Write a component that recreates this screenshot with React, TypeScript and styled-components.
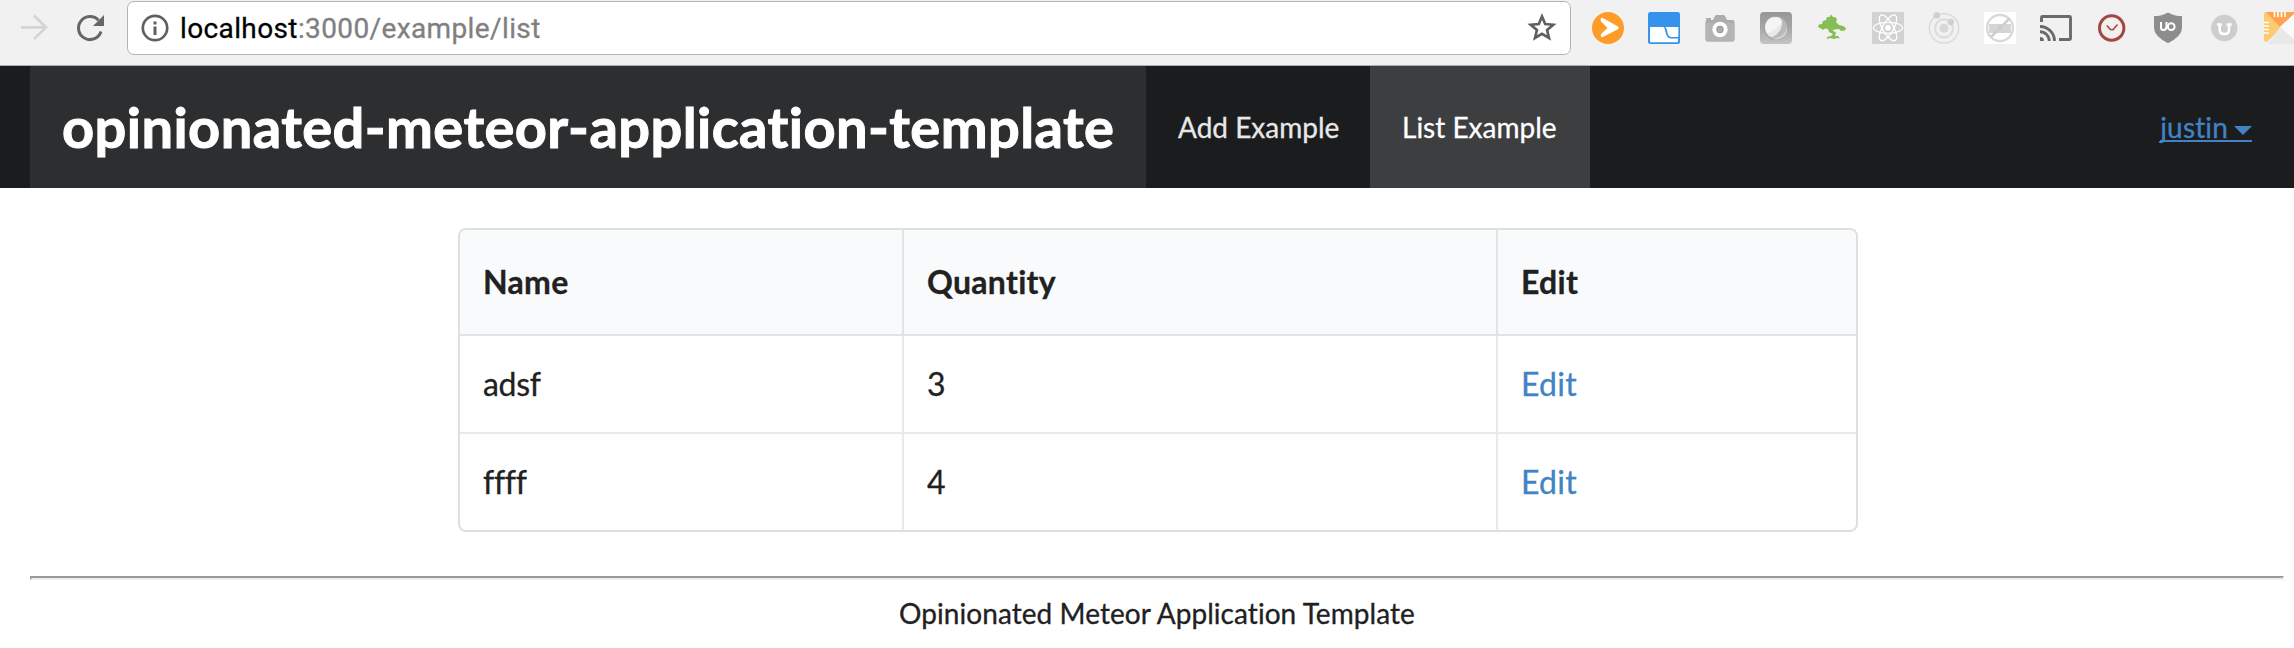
import React from "react";
import styled, { createGlobalStyle } from "styled-components";

const GlobalStyle = createGlobalStyle`
  * { box-sizing: border-box; }
  body {
    margin: 0;
    background: #fff;
    color: #212121;
    font-family: Lato, "Liberation Sans", sans-serif;
    font-size: 28px;
    font-variant-ligatures: none;
    -webkit-text-stroke: 0.3px currentColor;
    overflow: hidden;
  }
`;

const Toolbar = styled.div`
  display: flex;
  height: 66px;
  background: #f1f1f1;
  border-bottom: 1px solid #a9adab;
  overflow: hidden;
`;

const NavIcons = styled.div`
  display: flex;
  flex: none;
  width: 127px;
  height: 55px;
  padding: 14px 0 0 20px;
  gap: 24px;
`;

const AddressBar = styled.div`
  display: flex;
  align-items: center;
  flex: none;
  width: 1444px;
  height: 54px;
  margin-top: 1px;
  padding: 0 13px 0 12px;
  background: #fff;
  border: 1px solid #b4b4b4;
  border-radius: 7px;
`;

const Url = styled.div`
  flex: 1;
  padding: 2px 0 0 10px;
  font-family: Roboto, sans-serif;
  font-size: 28px;
  line-height: 40px;
  letter-spacing: 0.38px;
  color: #808080;
  white-space: nowrap;
`;

const Host = styled.span`
  color: #000;
`;

const Extensions = styled.div`
  display: flex;
  flex: none;
  gap: 24px;
  padding: 12px 0 0 21px;
`;

const Icon = styled.svg<{ $size?: number }>`
  display: block;
  flex: none;
  width: ${(p) => p.$size ?? 32}px;
  height: ${(p) => p.$size ?? 32}px;
`;

const Menu = styled.nav`
  display: flex;
  height: 122px;
  padding: 0 42px 0 30px;
  background: #1b1c1d;
`;

const MenuItem = styled.a<{ $width: number; $active?: boolean }>`
  display: flex;
  align-items: center;
  width: ${(p) => p.$width}px;
  padding: 0 0 0 32px;
  background: ${(p) => (p.$active ? "#3d3e3f" : "transparent")};
  color: ${(p) => (p.$active ? "#fff" : "#e8e8e8")};
  white-space: nowrap;
`;

const Brand = styled.h1`
  display: flex;
  align-items: center;
  width: 1116px;
  margin: 0;
  padding: 0 0 1px 32px;
  background: #2d2e30;
  color: #fff;
  font-size: 56px;
  font-weight: 700;
  letter-spacing: 0.42px;
  -webkit-text-stroke: 1px currentColor;
  white-space: nowrap;
`;

const UserLink = styled.a`
  display: flex;
  align-items: flex-start;
  align-self: flex-start;
  height: 34px;
  margin: 42px 0 0 auto;
  border-bottom: 2px solid #4183c4;
  color: #4183c4;
  letter-spacing: 0.15px;
  line-height: 39px;
`;

const Caret = styled.span`
  width: 0;
  height: 0;
  margin: 18px 0 0 6px;
  border: 9px solid transparent;
  border-top-color: #4183c4;
  border-bottom: 0;
`;

const Table = styled.table`
  width: 1400px;
  height: 304px;
  margin: 40px 0 0 458px;
  table-layout: fixed;
  border: 2px solid #dedfdf;
  border-radius: 8px;
  border-spacing: 0;
  font-size: 32px;
  letter-spacing: 0.3px;
  overflow: hidden;
`;

const Row = styled.tr`
  height: 98px;
  &:not(:last-child) > td { border-bottom: 2px solid #e8e9e9; }
  &:last-child { height: 96px; }
`;

const HeadRow = styled.tr`
  height: 106px;
`;

const HeadCell = styled.th`
  padding: 0 0 1px 23px;
  background: #f9fafb;
  border-bottom: 2px solid #e2e3e4;
  text-align: left;
  & + & { border-left: 2px solid #e2e3e4; }
`;

const Cell = styled.td`
  padding: 0 0 2px 23px;
  &:first-child { letter-spacing: -0.3px; }
  & + & { border-left: 2px solid #e8e9e9; }
`;

const EditLink = styled.a`
  color: #4183c4;
`;

const Rule = styled.hr`
  height: 4px;
  margin: 44px 10px 0 30px;
  border: 2px solid;
  border-color: #9a9a9a #eee #eee #9a9a9a;
`;

const Footer = styled.footer`
  padding: 13px 0 0 20px;
  line-height: 40px;
  letter-spacing: 0.06px;
  text-align: center;
`;

const ForwardIcon = () => (
  <Icon viewBox="0 0 32 32" fill="none" stroke="#d5d5d5" strokeWidth="2.7">
    <path d="M1 13.3H26M14 1.5L26 13.3L14 25" />
  </Icon>
);

const ReloadIcon = () => (
  <Icon viewBox="0 0 32 32" fill="none" stroke="#666" strokeWidth="3">
    <path d="M25 17.5A11.5 11.5 0 1 1 22.5 6.3" />
    <path d="M28 1V12H17Z" fill="#666" stroke="none" />
  </Icon>
);

const InfoIcon = () => (
  <Icon $size={30} viewBox="0 0 30 30" fill="none">
    <circle cx="15" cy="15" r="12.2" stroke="#5f6063" strokeWidth="2.7" />
    <path d="M13.5 8.5h3v3h-3zM13.5 13.5h3v8.5h-3z" fill="#5f6063" />
  </Icon>
);

const StarIcon = () => (
  <Icon $size={30} viewBox="0 0 30 30" fill="none">
    <path d="M15 3.5L18.2 11L26.3 11.7L20.1 17L22 25L15 20.8L8 25L9.9 17L3.7 11.7L11.8 11Z" stroke="#5f6063" strokeWidth="2.7" />
  </Icon>
);

const PlayIcon = () => (
  <Icon viewBox="0 0 32 32">
    <circle cx="16" cy="16" r="16" fill="#ff9c28" />
    <path d="M8.6 7.4Q8.8 5.3 10.8 6L26 14.5Q27.4 16 26 17.3L10.8 25Q8.5 25.6 8.8 23.3Q9 22 10 21L15.5 16L9.7 10Q8.5 9 8.6 7.4Z" fill="#fff" />
  </Icon>
);

const WindowIcon = () => (
  <Icon viewBox="0 0 32 32">
    <rect width="32" height="32" rx="2.5" fill="#3692ea" />
    <path d="M2 15H14.8C17 15 17 18.5 17.8 21Q19 26 22.5 26.6H30V29.5Q30 30.3 29 30.3H3Q2 30.3 2 29.3Z" fill="#fff" />
    <path d="M17.2 15H30.4V25H23Q20.2 24.5 19.5 20.5C19 18 18.7 16 17.2 15Z" fill="#fff" />
  </Icon>
);

const CameraIcon = () => (
  <Icon viewBox="0 0 32 32">
    <path d="M2 8V6h5v2h2l2-4q.4-1 2-1h6q1.5 0 2 1l2 4h5.5q2 0 2 2v17q0 2.5-2 2.5H3.5Q1.5 29.5 1.5 27V10Q1.5 8 3 8Z" fill="#acacac" />
    <path d="M1.5 11v16q0 2.5 2 2.5H28q2.5 0 2.5-2.5V11Z" fill="#b4b4b4" />
    <circle cx="16" cy="17.5" r="5.7" fill="#8e8e8e" stroke="#fff" strokeWidth="4" />
    <circle cx="16" cy="17.5" r="3" fill="#aaa" />
  </Icon>
);

const GemIcon = () => (
  <Icon viewBox="0 0 32 32">
    <defs>
      <linearGradient id="gem" x2="0" y2="1">
        <stop offset="0" stopColor="#979797" />
        <stop offset=".5" stopColor="#a6a6a6" />
        <stop offset="1" stopColor="#c4c4c4" />
      </linearGradient>
    </defs>
    <rect width="32" height="32" rx="4" fill="url(#gem)" />
    <circle cx="16" cy="16" r="11.8" fill="#b9b9b9" stroke="#a0a0a0" />
    <path d="M12 26.5Q24 26 27 15Q28.5 24 20 27Q15 28.5 12 26.5Z" fill="#d0d0d0" />
    <path d="M5 14Q7 4.5 16 5Q22 5 22 11Q21 21 13 24.5Q10 25.5 7.5 22Q4.5 18 5 14Z" fill="#f5f5f5" />
    <path d="M22 10Q21 21 12 25Q9 25 7 21Q13 20 22 10Z" fill="#e9e9e9" />
  </Icon>
);

const BonsaiIcon = () => (
  <Icon viewBox="0 0 32 32" fill="#86be55">
    <path d="M2 15L3 12.5L6 12L7 9L10 8L11 5L13.5 5L15 2.5L17 5L20 5.5L21 8L20 10L23 13L27 14L30 16L29 18.5L25 19L23 17L18 17.5L16.5 18.5L20 20.5L19 24L22 24L24 26.5L21 26L18 27L14 26L11 27L11 25L15 24L17 22L13 20L12 17L9 16.5L7 18L5 16.5Z" />
  </Icon>
);

const ReactIcon = () => (
  <Icon viewBox="0 0 32 32">
    <rect width="32" height="32" fill="#d2d2d2" />
    <g fill="none" stroke="#fff" strokeWidth="1.3">
      <ellipse cx="16" cy="15.8" rx="14.5" ry="5.5" />
      <ellipse cx="16" cy="15.8" rx="14.5" ry="5.5" transform="rotate(60 16 15.8)" />
      <ellipse cx="16" cy="15.8" rx="14.5" ry="5.5" transform="rotate(120 16 15.8)" />
    </g>
    <circle cx="16" cy="15.8" r="2.8" fill="#fff" />
  </Icon>
);

const OrbitIcon = () => (
  <Icon viewBox="0 0 32 32" fill="none" stroke="#dcdcdc">
    <circle cx="16" cy="16.3" r="14.7" strokeWidth="1.6" />
    <circle cx="16" cy="16.3" r="9" strokeWidth="2.2" />
    <circle cx="16" cy="16.3" r="4.5" fill="#d8d8d8" stroke="none" />
    <circle cx="8.6" cy="3.4" r="3.2" fill="#cfcfcf" stroke="none" />
    <circle cx="22.8" cy="10" r="3.2" fill="#cfcfcf" stroke="none" />
  </Icon>
);

const BlockedIcon = () => (
  <Icon viewBox="0 0 32 32">
    <rect width="32" height="32" fill="#fff" />
    <path d="M5 12H27V21H5Z" fill="#d5d5d5" />
    <circle cx="16" cy="16" r="13" fill="none" stroke="#d8d8d8" strokeWidth="2.3" />
    <path d="M7 25L25 7" stroke="#cecece" strokeWidth="2.5" />
    <path d="M14 18l2-4 2 4M13.5 14.5h5" fill="none" stroke="#c5c5c5" strokeWidth=".8" />
  </Icon>
);

const CastIcon = () => (
  <Icon viewBox="0 0 32 32" fill="none" stroke="#6a6a6a" strokeWidth="2.9">
    <path d="M1.5 10V5.5Q1.5 4.5 2.5 4.5H29.5Q30.5 4.5 30.5 5.5V26.5Q30.5 27.5 29.5 27.5H19" />
    <path d="M0 14.5A14.5 14.5 0 0 1 14.5 29M0 19.7A9.3 9.3 0 0 1 9.3 29" />
    <path d="M0 25A4 4 0 0 1 4 29H0Z" fill="#6a6a6a" stroke="none" />
  </Icon>
);

const ClockIcon = () => (
  <Icon viewBox="0 0 32 32" fill="none" stroke="#a04844">
    <circle cx="15.7" cy="16" r="12.2" fill="#f5eeee" strokeWidth="3" />
    <path d="M10.8 13.5L14.5 17.5L17 17.7L21.5 12.5" strokeWidth="1.6" />
  </Icon>
);

const ShieldIcon = () => (
  <Icon viewBox="0 0 32 32">
    <path d="M16 .4Q22 4 30 4V16Q30 24 16 31.2Q2 24 2 16V4Q10 4 16 .4Z" fill="#8d8d8d" />
    <g fill="none" stroke="#fff" strokeWidth="2">
      <path d="M9 10V15.5Q9 18 11.5 18Q14 18 14.5 15V10" />
      <circle cx="19.2" cy="14.7" r="3.4" />
    </g>
  </Icon>
);

const MagnetIcon = () => (
  <Icon viewBox="0 0 32 32">
    <circle cx="16.3" cy="16" r="13.2" fill="#cdcdcd" />
    <path d="M9 12.5H14M18.5 12.5H23.7M11.7 12.5V18Q11.7 22 16.3 22Q21 22 21 18V12.5" fill="none" stroke="#fff" strokeWidth="2.5" />
  </Icon>
);

const RulerIcon = () => (
  <Icon viewBox="0 0 32 32">
    <path d="M2 0H32V1L3 30Q0 30 0 27V2Q0 0 2 0Z" fill="#fdc971" />
    <path d="M2 0H32V1L16 15Z" fill="#ffa353" />
    <path d="M32 0V32H4L16 15Z" fill="#e8e8e8" />
    <path d="M32 0V29L16 15Z" fill="#fafafa" />
    <path d="M10.5 0V5M14 0V5M17.5 0V5M21 0V5M0 10.5H5M0 14H5M0 17.5H5M0 21H5" stroke="#fff" strokeWidth="1.6" />
  </Icon>
);

const rows = [
  { name: "adsf", quantity: 3 },
  { name: "ffff", quantity: 4 },
];

export default function App() {
  return (
    <>
      <GlobalStyle />
      <Toolbar>
        <NavIcons>
          <ForwardIcon />
          <ReloadIcon />
        </NavIcons>
        <AddressBar>
          <InfoIcon />
          <Url>
            <Host>localhost</Host>:3000/example/list
          </Url>
          <StarIcon />
        </AddressBar>
        <Extensions>
          <PlayIcon />
          <WindowIcon />
          <CameraIcon />
          <GemIcon />
          <BonsaiIcon />
          <ReactIcon />
          <OrbitIcon />
          <BlockedIcon />
          <CastIcon />
          <ClockIcon />
          <ShieldIcon />
          <MagnetIcon />
          <RulerIcon />
        </Extensions>
      </Toolbar>
      <Menu>
        <Brand>opinionated-meteor-application-template</Brand>
        <MenuItem $width={224}>Add Example</MenuItem>
        <MenuItem $width={220} $active>
          List Example
        </MenuItem>
        <UserLink>
          justin
          <Caret />
        </UserLink>
      </Menu>
      <Table>
        <colgroup>
          <col width="442" />
          <col width="594" />
          <col width="360" />
        </colgroup>
        <thead>
          <HeadRow>
            <HeadCell>Name</HeadCell>
            <HeadCell>Quantity</HeadCell>
            <HeadCell>Edit</HeadCell>
          </HeadRow>
        </thead>
        <tbody>
          {rows.map((row) => (
            <Row key={row.name}>
              <Cell>{row.name}</Cell>
              <Cell>{row.quantity}</Cell>
              <Cell>
                <EditLink>Edit</EditLink>
              </Cell>
            </Row>
          ))}
        </tbody>
      </Table>
      <Rule />
      <Footer>Opinionated Meteor Application Template</Footer>
    </>
  );
}
